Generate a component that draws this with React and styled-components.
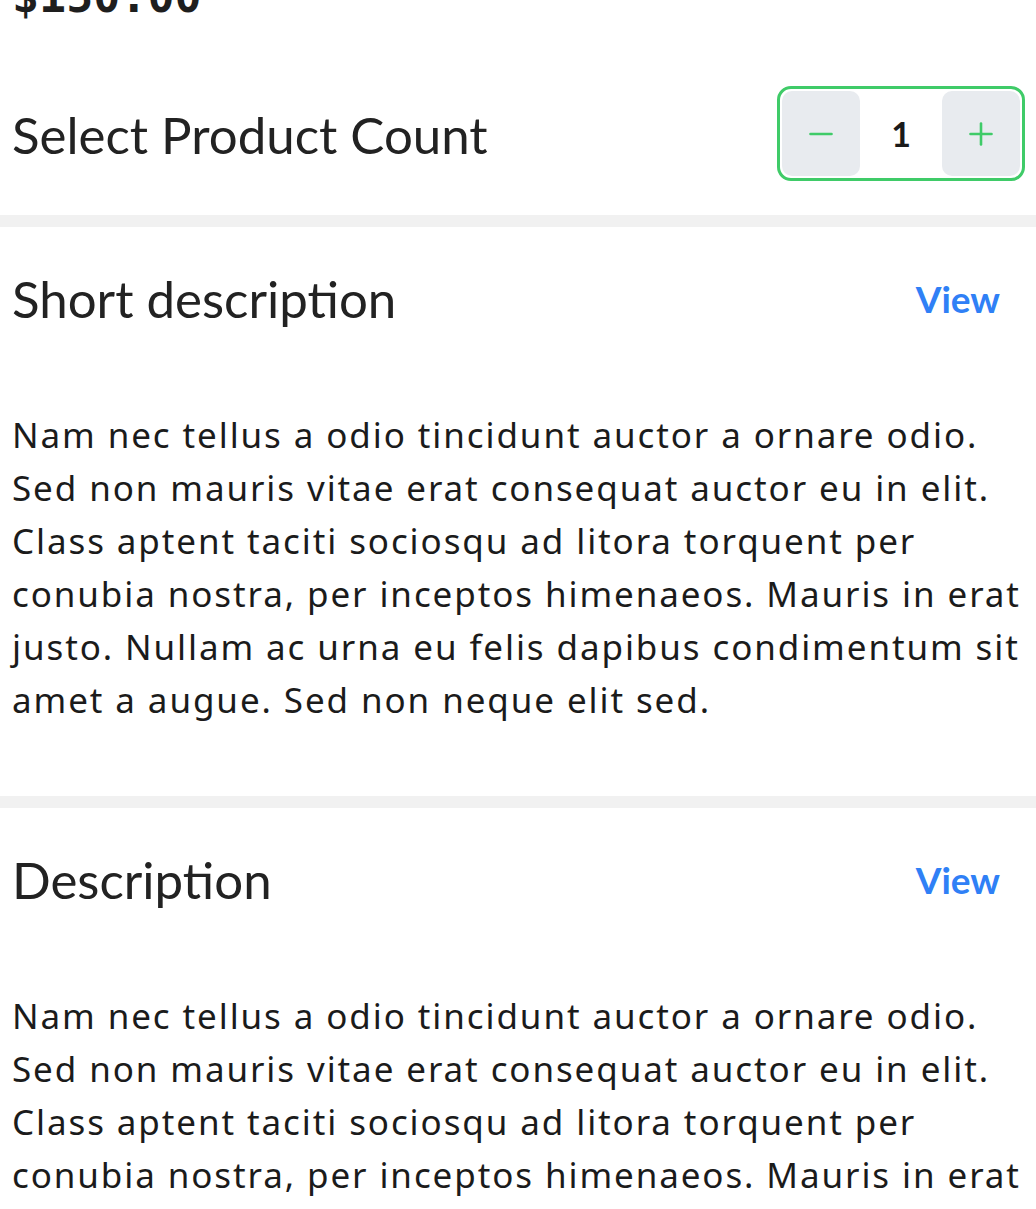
import React, { useState } from "react";
import styled, { createGlobalStyle } from "styled-components";

const Global = createGlobalStyle`
  html, body { margin: 0; padding: 0; background: #ffffff; }
  body { font-family: "Noto Sans", "Open Sans", sans-serif; color: #1b1b1b; overflow: hidden; }
  * { box-sizing: border-box; }
`;

const Page = styled.div`
  width: 1036px;
  display: flex;
  flex-direction: column;
`;

const Price = styled.div`
  margin-top: -30px;
  padding: 0 12px;
  font-family: "DejaVu Sans Mono", "Liberation Mono", monospace;
  font-weight: 700;
  font-size: 45px;
  line-height: 54px;
  color: #1e1e1e;
`;

const CountRow = styled.div`
  display: flex;
  align-items: center;
  justify-content: space-between;
  padding: 62px 11px 34px 12px;
`;

const Heading = styled.h2`
  margin: 0;
  font-family: "Lato", "Noto Sans", sans-serif;
  font-weight: 400;
  font-size: 51px;
  line-height: 68px;
  color: #222222;
`;

const CountTitle = styled(Heading)`
  padding-top: 3px;
`;

const Stepper = styled.div`
  display: flex;
  align-items: stretch;
  border: 3px solid #3fcb68;
  border-radius: 14px;
  padding: 2px;
  height: 95px;
`;

const StepButton = styled.button`
  width: 78px;
  border: none;
  border-radius: 10px;
  background: #e8ebef;
  display: flex;
  align-items: center;
  justify-content: center;
  padding: 0;
  cursor: pointer;
`;

const Count = styled.div`
  width: 82px;
  display: flex;
  align-items: center;
  justify-content: center;
  font-family: "Lato", "Noto Sans", sans-serif;
  font-weight: 700;
  font-size: 34px;
  color: #1a1a1a;
`;

const Divider = styled.div`
  height: 12px;
  background: #f1f1f1;
`;

const Section = styled.section`
  padding: 38px 8px 70px 12px;
  display: flex;
  flex-direction: column;
`;

const SectionHeader = styled.div`
  display: flex;
  align-items: center;
  justify-content: space-between;
`;

const ViewLink = styled.a`
  font-family: "Lato", "Noto Sans", sans-serif;
  font-weight: 700;
  font-size: 37px;
  line-height: 68px;
  color: #2f80f6;
  margin-right: 28px;
  text-decoration: none;
  cursor: pointer;
`;

const Body = styled.p`
  margin: 75px 0 0;
  font-family: "Noto Sans", "Open Sans", sans-serif;
  font-size: 35px;
  letter-spacing: 1.9px;
  line-height: 53px;
  color: #1b1b1b;
`;

const text =
  "Nam nec tellus a odio tincidunt auctor a ornare odio. Sed non mauris vitae erat consequat auctor eu in elit. Class aptent taciti sociosqu ad litora torquent per conubia nostra, per inceptos himenaeos. Mauris in erat justo. Nullam ac urna eu felis dapibus condimentum sit amet a augue. Sed non neque elit sed.";

const Minus = () => (
  <svg width="24" height="24" viewBox="0 0 24 24" fill="none" stroke="#3fcb68" strokeWidth="2.6" strokeLinecap="round">
    <line x1="1.5" y1="12" x2="22.5" y2="12" />
  </svg>
);

const Plus = () => (
  <svg width="24" height="24" viewBox="0 0 24 24" fill="none" stroke="#3fcb68" strokeWidth="2.6" strokeLinecap="round">
    <line x1="1.5" y1="12" x2="22.5" y2="12" />
    <line x1="12" y1="1.5" x2="12" y2="22.5" />
  </svg>
);

export default function App() {
  const [count, setCount] = useState(1);
  return (
    <Page>
      <Global />
      <Price>$150.00</Price>
      <CountRow>
        <CountTitle>Select Product Count</CountTitle>
        <Stepper>
          <StepButton onClick={() => setCount((c) => Math.max(1, c - 1))}>
            <Minus />
          </StepButton>
          <Count>{count}</Count>
          <StepButton onClick={() => setCount((c) => c + 1)}>
            <Plus />
          </StepButton>
        </Stepper>
      </CountRow>
      <Divider />
      <Section>
        <SectionHeader>
          <Heading>Short description</Heading>
          <ViewLink>View</ViewLink>
        </SectionHeader>
        <Body>{text}</Body>
      </Section>
      <Divider />
      <Section>
        <SectionHeader>
          <Heading>Description</Heading>
          <ViewLink>View</ViewLink>
        </SectionHeader>
        <Body>{text}</Body>
      </Section>
    </Page>
  );
}
